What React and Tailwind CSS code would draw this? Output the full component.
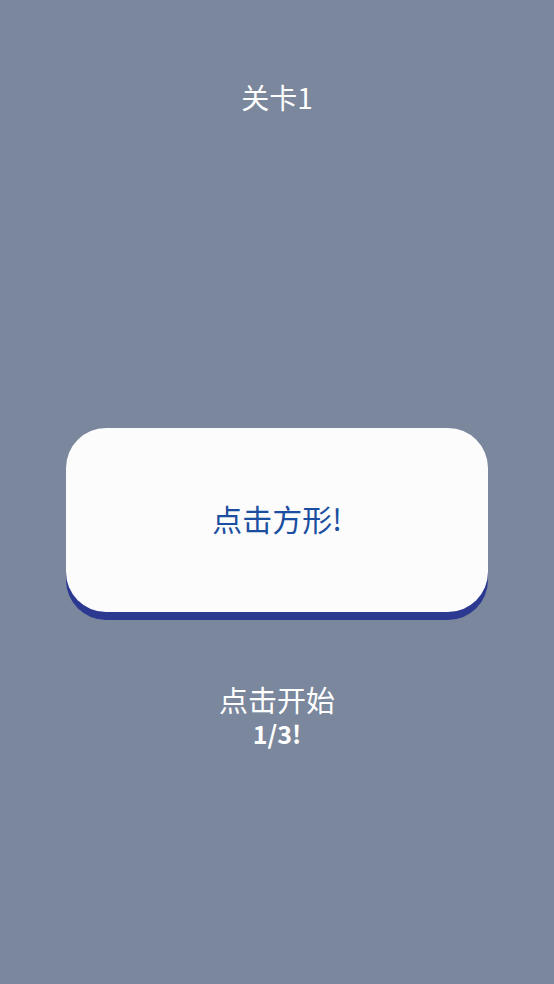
export default function App() {
  return (
    <div
      className="w-full h-[984px] bg-[#7b879d] flex flex-col items-center text-white"
      style={{ fontFamily: '"Noto Sans CJK SC", "Noto Sans", sans-serif' }}
    >
      <h1 className="pt-[80px] text-[28px] leading-[34px] font-normal">关卡1</h1>

      <button className="mt-[314px] w-[422px] h-[184px] rounded-[40px] bg-[#fcfcfd] shadow-[0_8px_0_#2b3990] flex items-center justify-center pb-[4px] text-[30px] text-[#1b4ea0]">
        点击方形!
      </button>

      <div className="mt-[70px] flex flex-col items-center gap-[2px]">
        <p className="text-[29px] leading-[34px]">点击开始</p>
        <p className="text-[25px] leading-[30px] font-bold">1/3!</p>
      </div>
    </div>
  );
}
